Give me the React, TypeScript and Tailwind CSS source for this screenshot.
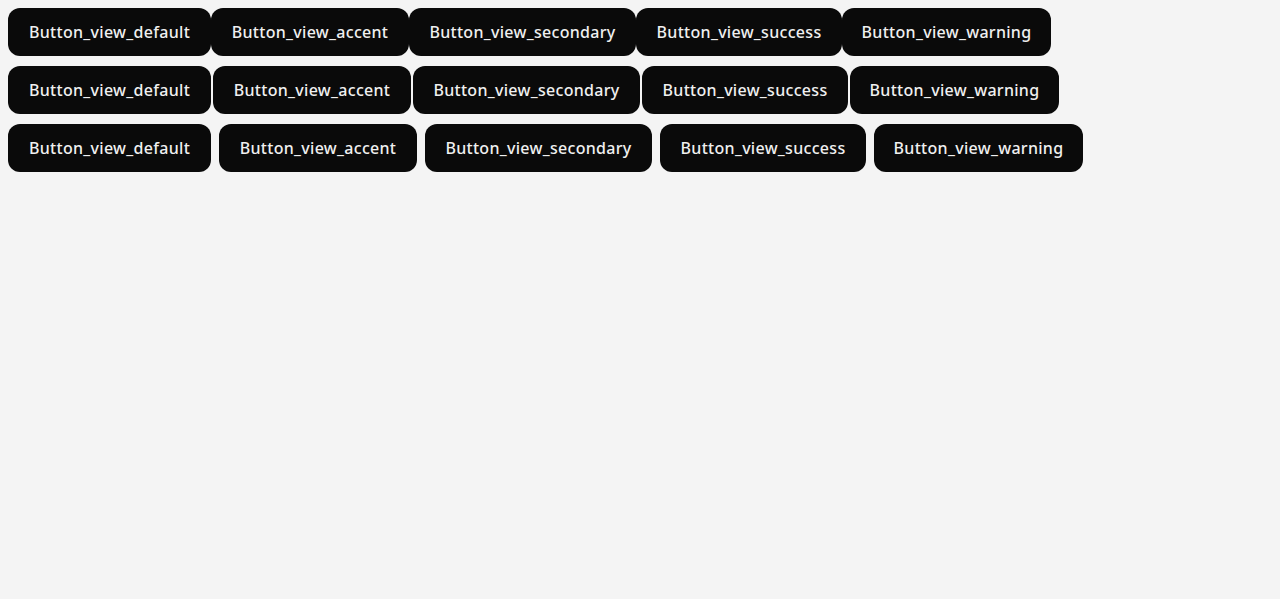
import React from "react";

const items = [
  { label: "Button_view_default", w: "w-[203px]" },
  { label: "Button_view_accent", w: "w-[198px]" },
  { label: "Button_view_secondary", w: "w-[227px]" },
  { label: "Button_view_success", w: "w-[206px]" },
  { label: "Button_view_warning", w: "w-[209px]" },
];

function Btn({ label, w }: { label: string; w: string }) {
  return (
    <button
      className={`${w} h-12 flex items-center justify-center rounded-xl bg-[#0a0a0a] text-[#f0f0f0] text-[16px] font-medium tracking-[0.3px] leading-none whitespace-nowrap [font-family:'Noto_Sans',sans-serif]`}
    >
      {label}
    </button>
  );
}

export default function App() {
  return (
    <div className="min-h-[599px] bg-[#f4f4f4] p-2 flex flex-col gap-2.5 items-start">
      <div className="flex">
        {items.map((it) => (
          <Btn key={it.label} {...it} />
        ))}
      </div>
      <div className="flex gap-0.5">
        {items.map((it) => (
          <Btn key={it.label} {...it} />
        ))}
      </div>
      <div className="flex gap-2">
        {items.map((it) => (
          <Btn key={it.label} {...it} />
        ))}
      </div>
    </div>
  );
}
